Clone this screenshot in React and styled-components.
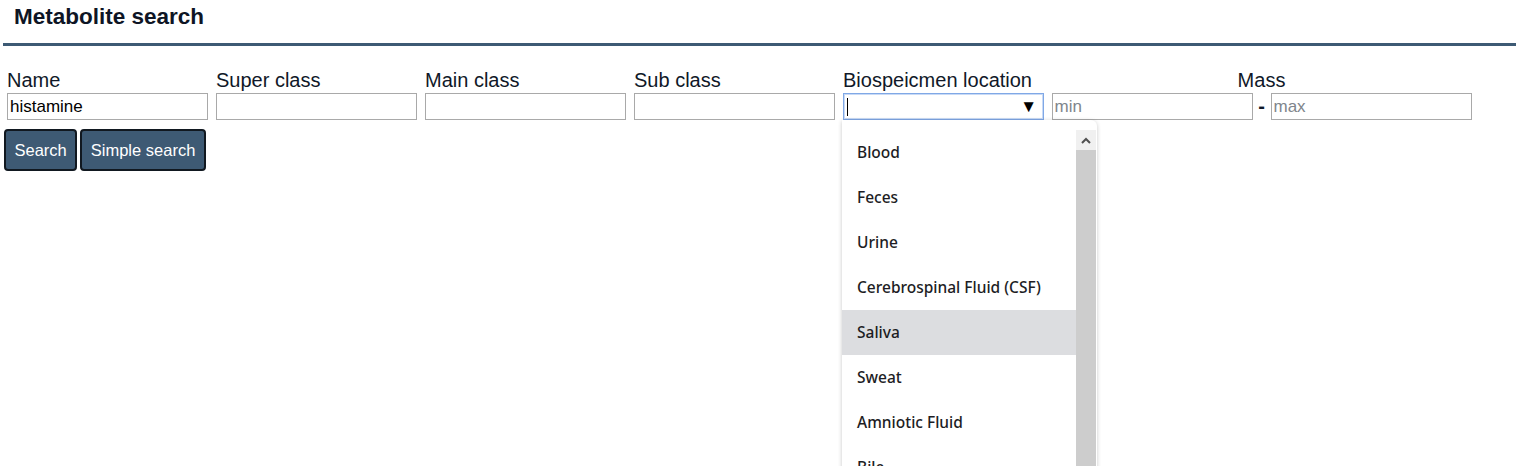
import React from 'react';
import styled, { createGlobalStyle } from 'styled-components';

const GlobalStyle = createGlobalStyle`
  body {
    margin: 0;
    background: #fff;
    font-family: "Liberation Sans", Arial, sans-serif;
    color: #101828;
  }
`;

const Page = styled.div`
  width: 1516px;
  height: 466px;
  overflow: hidden;
`;

const Header = styled.div`
  margin-left: 3px;
  padding: 4px 0 0 11px;
  height: 39px;
  border-bottom: 3px solid #3d5a74;
`;

const Title = styled.h1`
  margin: 0;
  font-size: 22.5px;
  font-weight: bold;
  line-height: 26px;
  color: #0e1525;
`;

const Form = styled.div`
  padding: 23px 0 0 7px;
`;

const FieldRow = styled.div`
  display: flex;
  gap: 8px;
`;

const Field = styled.div`
  position: relative;
  display: flex;
  flex-direction: column;
  width: ${p => p.$width || 201}px;
  align-items: ${p => (p.$center ? 'center' : 'stretch')};
`;

const Label = styled.label`
  font-size: 20px;
  line-height: 22px;
  margin-bottom: 2px;
  color: #101828;
`;

const TextInput = styled.input`
  box-sizing: border-box;
  width: ${p => p.$width || 201}px;
  height: 27px;
  margin: 0;
  padding: 0 2px;
  border: 1px solid #a9a9a9;
  font-family: "Liberation Sans", Arial, sans-serif;
  font-size: 17px;
  color: #000;
  outline: none;
  &::placeholder {
    color: #80858c;
  }
`;

const SelectBox = styled.div`
  box-sizing: border-box;
  position: relative;
  width: 201px;
  height: 27px;
  border: 1px solid #80a8e6;
  box-shadow: inset 0 0 0 1px #c8daf6;
  display: flex;
  align-items: center;
  justify-content: space-between;
  padding: 0 6px 0 3px;
`;

const Caret = styled.span`
  width: 1px;
  height: 18px;
  background: #000;
`;

const Arrow = styled.span`
  font-size: 17px;
  color: #000;
  line-height: 1;
`;

const RangeRow = styled.div`
  display: flex;
  align-items: center;
  gap: 5px;
`;

const Dash = styled.span`
  font-size: 20px;
  font-weight: bold;
  width: 8px;
  text-align: center;
`;

const Dropdown = styled.div`
  position: absolute;
  top: 51px;
  left: -1px;
  width: 255px;
  height: 360px;
  background: #fff;
  border-radius: 0 6px 0 0;
  box-shadow: 0 1px 4px rgba(0, 0, 0, 0.22);
  display: flex;
  padding-top: 10px;
  box-sizing: border-box;
  z-index: 5;
`;

const OptionList = styled.ul`
  list-style: none;
  margin: 0;
  padding: 0;
  flex: 1;
`;

const Option = styled.li`
  height: 45px;
  display: flex;
  align-items: center;
  padding: 0 0 2px 15px;
  box-sizing: border-box;
  font-family: "Noto Sans", "Open Sans", sans-serif;
  font-size: 15.5px;
  font-weight: 500;
  color: #1d1d24;
  background: ${p => (p.$active ? '#dcdde0' : 'transparent')};
`;

const ScrollBar = styled.div`
  width: 20px;
  margin-right: 1px;
  display: flex;
  flex-direction: column;
`;

const ScrollArrow = styled.div`
  height: 20px;
  background: #f0f0f0;
  display: flex;
  align-items: center;
  justify-content: center;
`;

const ScrollThumb = styled.div`
  flex: 1;
  background: #cdcdcd;
`;

const ButtonRow = styled.div`
  display: flex;
  gap: 3px;
  margin: 9px 0 0 -3px;
`;

const Button = styled.button`
  height: 42px;
  padding: 0 8.5px;
  background: #3e5a74;
  color: #fff;
  border: 2px solid #111820;
  border-radius: 4px;
  font-family: "Liberation Sans", Arial, sans-serif;
  font-size: 16.5px;
`;

const locations = [
  'Blood',
  'Feces',
  'Urine',
  'Cerebrospinal Fluid (CSF)',
  'Saliva',
  'Sweat',
  'Amniotic Fluid',
  'Bile',
];

export default function App() {
  return (
    <Page>
      <GlobalStyle />
      <Header>
        <Title>Metabolite search</Title>
      </Header>
      <Form>
        <FieldRow>
          <Field>
            <Label>Name</Label>
            <TextInput defaultValue="histamine" />
          </Field>
          <Field>
            <Label>Super class</Label>
            <TextInput />
          </Field>
          <Field>
            <Label>Main class</Label>
            <TextInput />
          </Field>
          <Field>
            <Label>Sub class</Label>
            <TextInput />
          </Field>
          <Field>
            <Label>Biospeicmen location</Label>
            <SelectBox>
              <Caret />
              <Arrow>▼</Arrow>
            </SelectBox>
            <Dropdown>
              <OptionList>
                {locations.map(loc => (
                  <Option key={loc} $active={loc === 'Saliva'}>{loc}</Option>
                ))}
              </OptionList>
              <ScrollBar>
                <ScrollArrow>
                  <svg width="10" height="7" viewBox="0 0 10 7">
                    <path d="M1 6 L5 2 L9 6" stroke="#505050" strokeWidth="2" fill="none" />
                  </svg>
                </ScrollArrow>
                <ScrollThumb />
              </ScrollBar>
            </Dropdown>
          </Field>
          <Field $width={419} $center>
            <Label>Mass</Label>
            <RangeRow>
              <TextInput placeholder="min" />
              <Dash>-</Dash>
              <TextInput placeholder="max" />
            </RangeRow>
          </Field>
        </FieldRow>
        <ButtonRow>
          <Button>Search</Button>
          <Button>Simple search</Button>
        </ButtonRow>
      </Form>
    </Page>
  );
}
